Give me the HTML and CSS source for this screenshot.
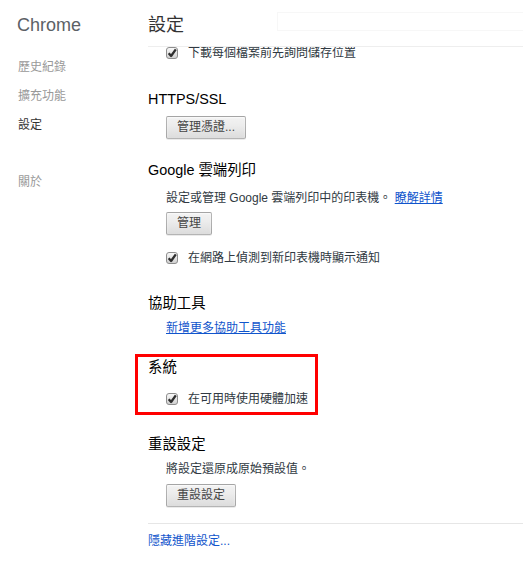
FILE: index.html
```html
<!DOCTYPE html>
<html lang="zh-Hant">
<head>
<meta charset="utf-8">
<title>設定</title>
<link rel="stylesheet" href="styles.css">
</head>
<body>
<div class="app">
  <aside class="sidebar">
    <h1 class="brand">Chrome</h1>
    <ul class="nav">
      <li class="nav-item">歷史紀錄</li>
      <li class="nav-item">擴充功能</li>
      <li class="nav-item selected">設定</li>
      <li class="nav-item about">關於</li>
    </ul>
  </aside>
  <main class="main">
    <header class="page-header">
      <h1 class="page-title">設定</h1>
      <div class="search-box"></div>
    </header>
    <div class="content">
      <div class="indent cb-row first">
        <span class="checkbox"><svg viewBox="0 0 12 12" width="12" height="12"><defs><linearGradient id="g1" x1="0" y1="0" x2="0" y2="1"><stop offset="0" stop-color="#fafafa"/><stop offset="1" stop-color="#cfcfcf"/></linearGradient></defs><rect x="0.5" y="0.5" width="11" height="11" rx="2.5" fill="url(#g1)" stroke="#8e8e8e"/><path d="M2.7 6.2 L5.1 9 L9.8 2.4" fill="none" stroke="#2e2e2e" stroke-width="2.3" stroke-linejoin="round"/></svg></span>
        <span>下載每個檔案前先詢問儲存位置</span>
      </div>

      <section class="section s-https">
        <h3 class="section-title">HTTPS/SSL</h3>
        <div class="indent btn-row gap-8"><button class="btn">管理憑證...</button></div>
      </section>

      <section class="section s-cloud">
        <h3 class="section-title">Google 雲端列印</h3>
        <div class="indent text-row gap-10">設定或管理 Google 雲端列印中的印表機。 <a class="link">瞭解詳情</a></div>
        <div class="indent btn-row gap-5"><button class="btn">管理</button></div>
        <div class="indent cb-row gap-14">
          <span class="checkbox"><svg viewBox="0 0 12 12" width="12" height="12"><defs><linearGradient id="g2" x1="0" y1="0" x2="0" y2="1"><stop offset="0" stop-color="#fafafa"/><stop offset="1" stop-color="#cfcfcf"/></linearGradient></defs><rect x="0.5" y="0.5" width="11" height="11" rx="2.5" fill="url(#g2)" stroke="#8e8e8e"/><path d="M2.7 6.2 L5.1 9 L9.8 2.4" fill="none" stroke="#2e2e2e" stroke-width="2.3" stroke-linejoin="round"/></svg></span>
          <span>在網路上偵測到新印表機時顯示通知</span>
        </div>
      </section>

      <section class="section s-access">
        <h3 class="section-title">協助工具</h3>
        <div class="indent text-row gap-7"><a class="link">新增更多協助工具功能</a></div>
      </section>

      <section class="section s-system">
        <div class="highlight"></div>
        <h3 class="section-title">系統</h3>
        <div class="indent cb-row gap-14">
          <span class="checkbox"><svg viewBox="0 0 12 12" width="12" height="12"><defs><linearGradient id="g3" x1="0" y1="0" x2="0" y2="1"><stop offset="0" stop-color="#fafafa"/><stop offset="1" stop-color="#cfcfcf"/></linearGradient></defs><rect x="0.5" y="0.5" width="11" height="11" rx="2.5" fill="url(#g3)" stroke="#8e8e8e"/><path d="M2.7 6.2 L5.1 9 L9.8 2.4" fill="none" stroke="#2e2e2e" stroke-width="2.3" stroke-linejoin="round"/></svg></span>
          <span>在可用時使用硬體加速</span>
        </div>
      </section>

      <section class="section s-reset">
        <h3 class="section-title">重設設定</h3>
        <div class="indent text-row gap-7">將設定還原成原始預設值。</div>
        <div class="indent btn-row gap-6"><button class="btn">重設設定</button></div>
      </section>

      <div class="footer">
        <a class="footer-link">隱藏進階設定...</a>
      </div>
    </div>
  </main>
</div>
</body>
</html>
```

FILE: styles.css
```css
* { box-sizing: border-box; }

html, body {
  margin: 0;
  padding: 0;
  background: #ffffff;
}

body {
  font-family: "Liberation Sans", "Noto Sans CJK TC", sans-serif;
  font-size: 12px;
  color: #303942;
}

.app {
  display: flex;
  min-height: 572px;
}

/* Sidebar */
.sidebar {
  width: 148px;
  flex: none;
  padding: 13px 0 0 17px;
}

.brand {
  margin: 0;
  font-size: 18px;
  line-height: 24px;
  font-weight: normal;
  color: rgb(92, 97, 102);
}

.nav {
  list-style: none;
  margin: 21px 0 0 1px;
  padding: 0;
  display: flex;
  flex-direction: column;
  gap: 11px;
}

.nav-item {
  line-height: 18px;
  color: #999999;
}

.nav-item.selected {
  color: #333333;
}

.nav-item.about {
  margin-top: 28px;
}

/* Main */
.main {
  flex: 1;
  min-width: 0;
  display: flex;
  flex-direction: column;
}

.page-header {
  position: relative;
  z-index: 1;
  background: #ffffff;
  height: 47px;
  display: flex;
  align-items: flex-start;
  border-bottom: 1px solid #eeeeee;
  padding-top: 13px;
}

.page-title {
  margin: 0;
  font-size: 18px;
  line-height: 24px;
  font-weight: normal;
  color: #333333;
}

.search-box {
  margin-left: auto;
  margin-top: -1px;
  width: 246px;
  height: 19px;
  border: 1px solid #f7f7f7;
  border-right: none;
}

.indent {
  padding-left: 18px;
}

.cb-row {
  display: flex;
  align-items: center;
  height: 18px;
  line-height: 18px;
}

.cb-row.first {
  margin-top: -3px;
}

.checkbox {
  width: 12px;
  height: 12px;
  margin-right: 10px;
  display: flex;
}

.text-row {
  line-height: 18px;
  height: 18px;
}

.btn-row {
  display: flex;
}

.btn {
  height: 23px;
  padding: 0 10px;
  border: 1px solid rgba(0, 0, 0, 0.25);
  border-radius: 2px;
  background: linear-gradient(#f2f2f2, #ededed 38%, #dcdcdc);
  box-shadow: 0 1px 0 rgba(0, 0, 0, 0.08), inset 0 1px 2px rgba(255, 255, 255, 0.75);
  color: #444444;
  font-family: "Liberation Sans", "Noto Sans CJK TC", sans-serif;
  font-size: 12px;
  line-height: 21px;
}

.link {
  color: rgb(17, 85, 204);
  text-decoration: underline;
}

/* Sections */
.section-title {
  margin: 0;
  font-size: 14.4px;
  line-height: 18px;
  height: 18px;
  font-weight: normal;
  color: #000000;
}

.s-https { margin-top: 28px; }
.s-cloud { margin-top: 22px; }
.s-access { margin-top: 27px; }
.s-system { margin-top: 21px; position: relative; }
.s-reset { margin-top: 27px; }

.gap-5 { margin-top: 5px; }
.gap-6 { margin-top: 6px; }
.gap-7 { margin-top: 7px; }
.gap-8 { margin-top: 8px; }
.gap-10 { margin-top: 10px; }
.gap-14 { margin-top: 14px; }

.highlight {
  position: absolute;
  left: -13px;
  top: -4px;
  width: 183px;
  height: 61px;
  border: 3px solid #ff0000;
}

.footer {
  margin-top: 16px;
  border-top: 1px solid #e6e6e6;
  padding-top: 8px;
  line-height: 18px;
}

.footer-link {
  color: rgb(17, 85, 204);
  text-decoration: none;
}
```
